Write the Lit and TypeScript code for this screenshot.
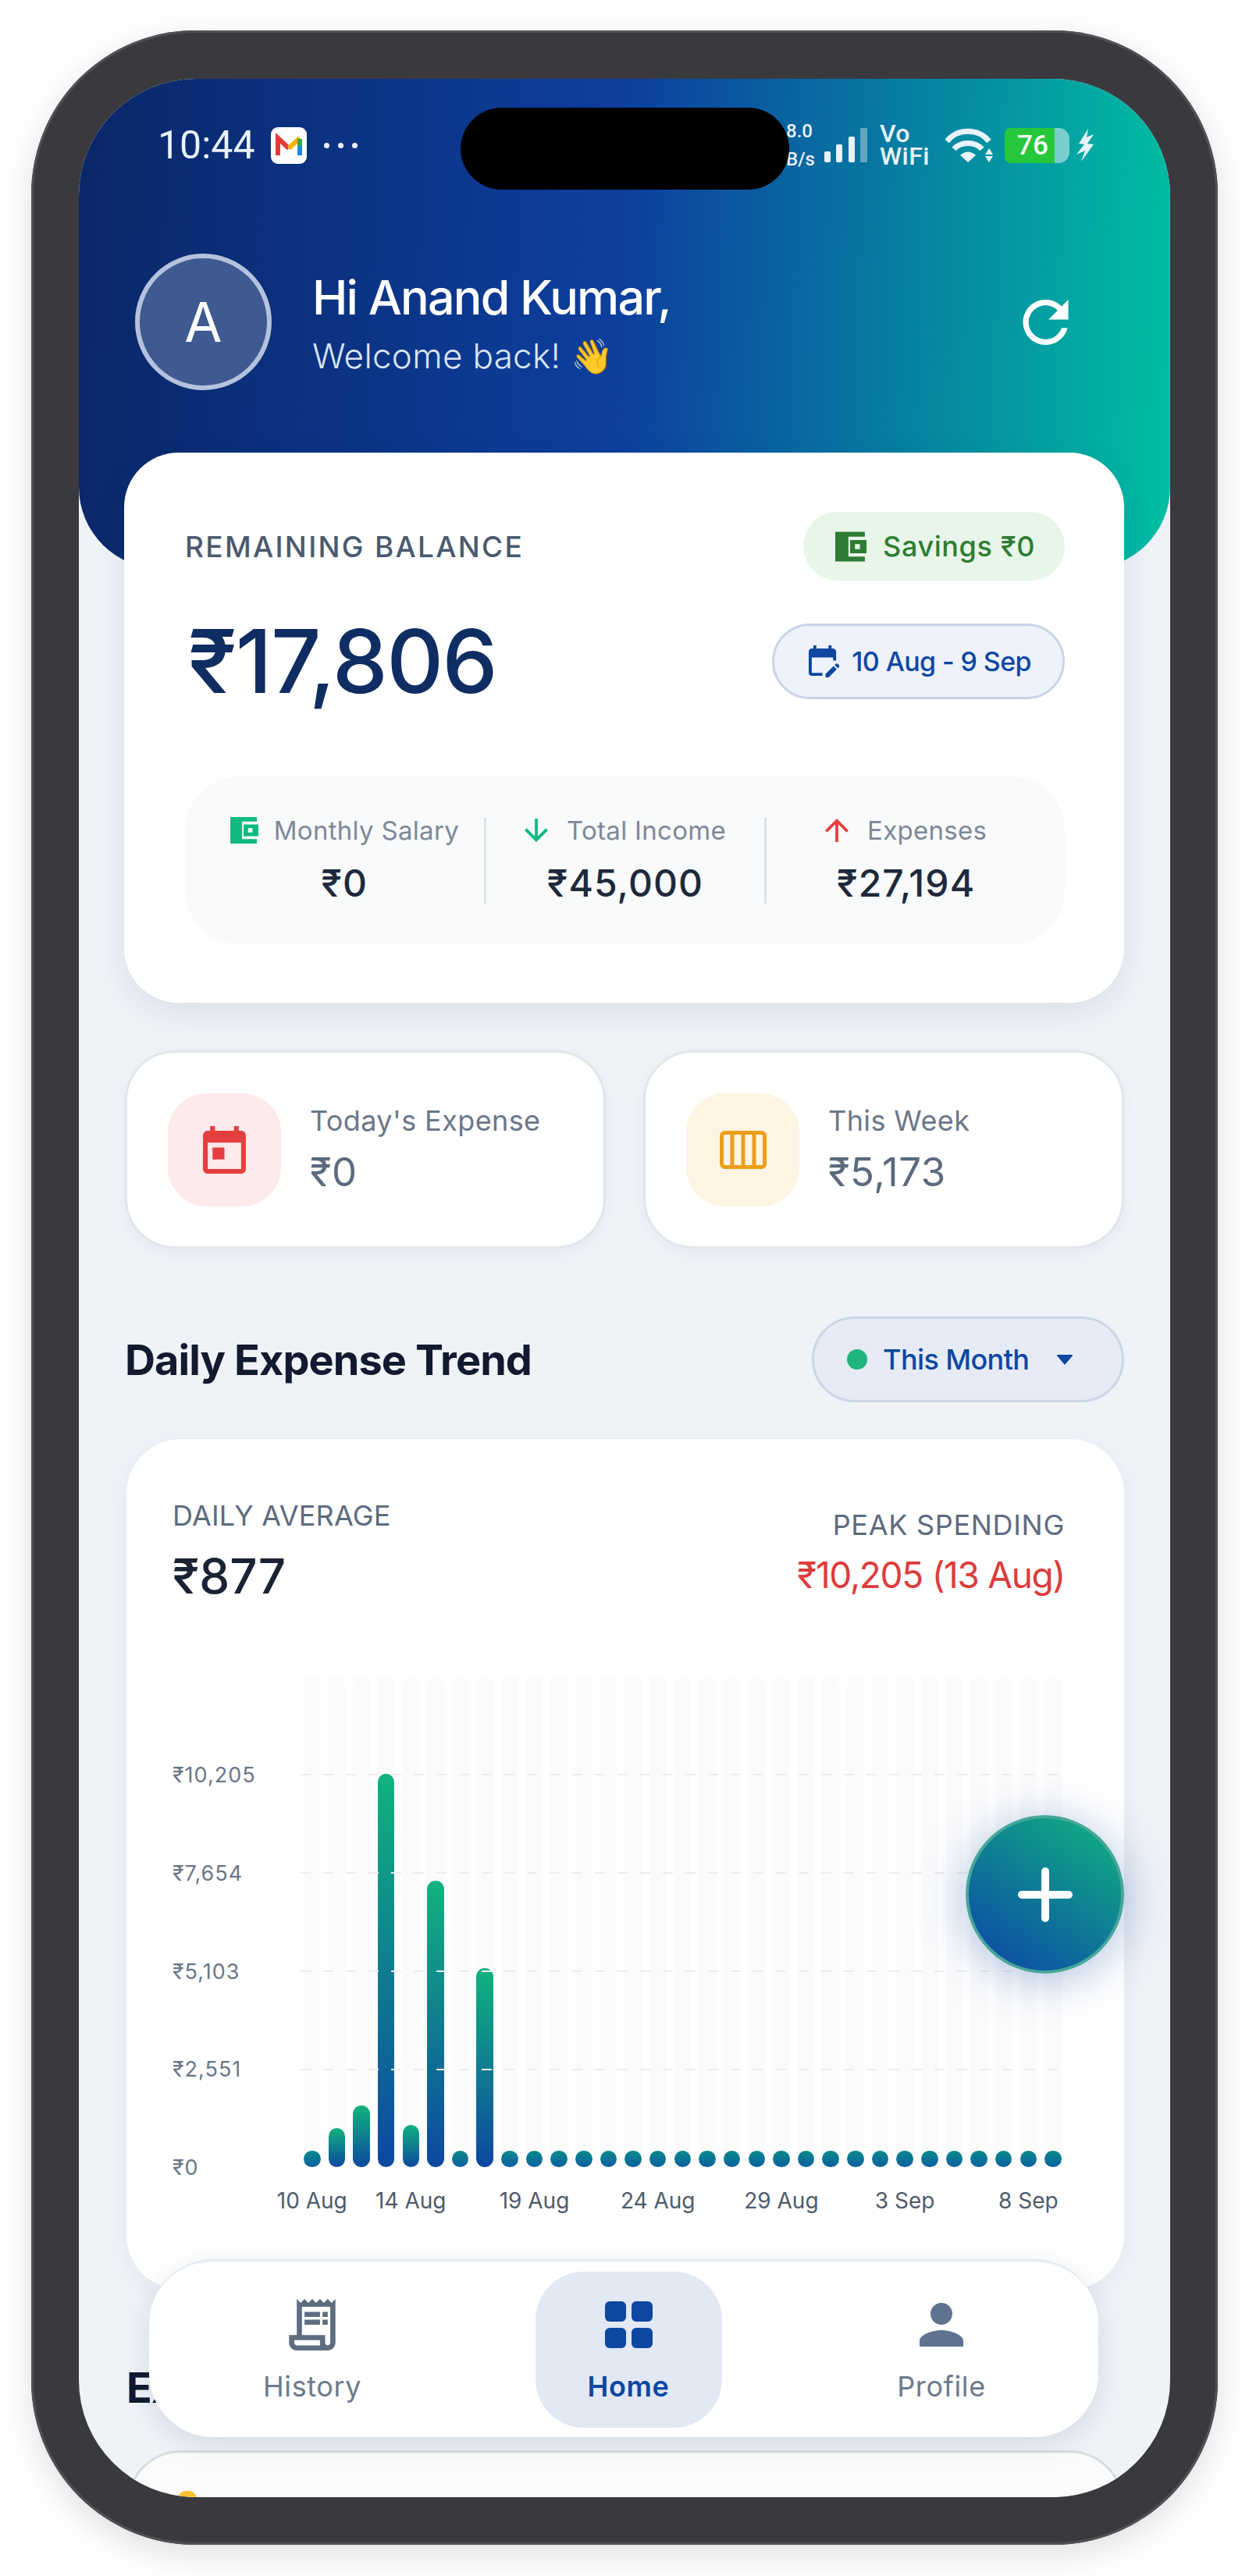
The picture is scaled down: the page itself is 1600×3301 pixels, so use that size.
import { LitElement, html, css, svg } from 'lit';
import { customElement } from 'lit/decorators.js';

// heights of the 31 daily bars, 10 Aug to 9 Sep
const BAR_HEIGHTS = [21, 50, 79, 504, 54, 367, 21, 255];
const DAY_LABELS: Record<number, string> = {
  0: '10 Aug', 4: '14 Aug', 9: '19 Aug', 14: '24 Aug',
  19: '29 Aug', 24: '3 Sep', 29: '8 Sep'
};
const Y_LABELS = ['₹10,205', '₹7,654', '₹5,103', '₹2,551', '₹0'];

const walletIcon = svg`
  <path d="M3 3h18v3H11v12h10v3H3z"/>
  <path fill-rule="evenodd" d="M12 8h10v8H12zM15 10.5v3h3v-3z"/>`;

const receiptIcon = svg`
  <path d="M19.5 3.5 18 2l-1.5 1.5L15 2l-1.5 1.5L12 2l-1.5 1.5L9 2 7.5 3.5 6 2v14H3v3c0 1.66 1.34 3 3 3h12c1.66 0 3-1.34 3-3V2l-1.5 1.5zM15 20H6c-.55 0-1-.45-1-1v-1h10v2zm4-1c0 .55-.45 1-1 1s-1-.45-1-1v-3H8V5h11v14z"/>
  <path d="M9 7h6v2H9zm7 0h2v2h-2zm-7 3h6v2H9zm7 0h2v2h-2z"/>`;

@customElement('app-root')
export class AppRoot extends LitElement {
  static styles = css`
    :host {
      display: block;
      width: 1600px;
      height: 3301px;
      background: #fff;
      font-family: Inter, 'Noto Sans', sans-serif;
      color: #1e293b;
    }

    .page {
      padding: 39px 40px;
    }

    .phone {
      padding: 62px 61px 61px;
      height: 3222px;
      box-sizing: border-box;
      background: #3a3a3e;
      border-radius: 210px;
      box-shadow: 0 12px 44px rgba(0, 0, 0, .13), inset 0 0 0 3px #515155;
    }

    .screen {
      position: relative;
      height: 3099px;
      overflow: hidden;
      background: #eff2f7;
      border-radius: 150px;
    }

    .island {
      position: absolute;
      left: 489px;
      top: 37px;
      width: 421px;
      height: 105px;
      border-radius: 53px;
      background: #000;
    }

    /* header */
    .header {
      height: 628px;
      padding-top: 59px;
      box-sizing: border-box;
      background: linear-gradient(92deg, #0a2768 0%, #0d3f9f 50%, #00bfa3 100%);
      border-radius: 0 0 105px 105px;
      color: #fff;
    }

    .status {
      display: flex;
      justify-content: space-between;
      align-items: center;
      height: 52px;
      padding: 0 98px 0 101px;
      font-family: Roboto, sans-serif;
      color: #e8f3fb;
    }

    .status-left, .status-right {
      display: flex;
      align-items: center;
    }

    .time {
      font-size: 50px;
      line-height: 52px;
      margin-right: 20px;
    }

    .gmail {
      width: 46px;
      height: 47px;
      margin-right: 22px;
    }

    .dots {
      display: flex;
      gap: 11px;
    }

    .dots i {
      width: 7px;
      height: 7px;
      border-radius: 50%;
      background: #e8f3fb;
    }

    .speed {
      width: 34px;
      margin-right: 15px;
      font-size: 24px;
      font-weight: 500;
      line-height: 36px;
      text-align: right;
      white-space: nowrap;
    }

    .signal {
      width: 55px;
      height: 44px;
      margin-right: 16px;
    }

    .vowifi {
      width: 70px;
      margin-right: 14px;
      font-size: 32px;
      font-weight: 500;
      line-height: 29px;
      letter-spacing: .4px;
    }

    .wifi {
      width: 62px;
      height: 44px;
      margin-right: 14px;
    }

    .battery {
      display: flex;
      width: 83px;
      height: 45px;
      margin-right: 9px;
    }

    .battery-level {
      width: 64px;
      background: #27c73c;
      border-radius: 8px 0 0 8px;
      font-size: 35px;
      font-weight: 500;
      line-height: 45px;
      text-align: center;
      color: #f3fff3;
      padding-left: 8px;
      box-sizing: border-box;
    }

    .battery-rest {
      width: 19px;
      background: rgba(220, 240, 240, .55);
      border-radius: 0 14px 14px 0;
    }

    .bolt {
      width: 22px;
      height: 42px;
    }

    .greeting {
      display: flex;
      align-items: center;
      margin-top: 113px;
      padding: 0 130px 0 72px;
    }

    .avatar {
      display: flex;
      align-items: center;
      justify-content: center;
      width: 175px;
      height: 175px;
      box-sizing: border-box;
      border: 6px solid #b5c2de;
      border-radius: 50%;
      background: #3e5a90;
      font-size: 70px;
      font-weight: 400;
    }

    .greeting-text {
      flex: 1;
      margin-left: 52px;
    }

    .hello {
      font-size: 61px;
      font-weight: 500;
      line-height: 80px;
      letter-spacing: -1.8px;
    }

    .welcome {
      margin-top: 7px;
      font-size: 44px;
      font-weight: 300;
      line-height: 56px;
      letter-spacing: .3px;
      color: #d8e5f6;
    }

    .refresh {
      width: 59px;
      height: 58px;
      fill: #fff;
    }

    /* content */
    .content {
      padding: 0 59px 0 59px;
    }

    .balance {
      margin: -149px 0 0 -1px;
      height: 705px;
      padding: 76px 76px 0 78px;
      box-sizing: border-box;
      background: #fff;
      border-radius: 70px;
      box-shadow: 0 12px 40px rgba(30, 50, 90, .09);
    }

    .balance-row {
      display: flex;
      align-items: center;
      justify-content: space-between;
    }

    .balance-label {
      font-size: 37px;
      font-weight: 500;
      letter-spacing: 2.3px;
      color: #4b5a6e;
    }

    .savings {
      display: flex;
      align-items: center;
      gap: 21px;
      height: 88px;
      padding: 0 38px 0 41px;
      border-radius: 44px;
      background: #e8f5e9;
      color: #2e7d32;
      font-size: 36px;
      font-weight: 500;
      letter-spacing: .6px;
    }

    .savings svg {
      width: 40px;
      height: 39px;
      fill: #2e7d32;
    }

    .amount-row {
      margin-top: 55px;
    }

    .amount {
      margin-left: 4px;
      font-size: 113px;
      font-weight: 500;
      letter-spacing: -1.6px;
      color: #0f2d63;
      line-height: 97px;
    }

    .range {
      display: flex;
      align-items: center;
      gap: 15px;
      height: 97px;
      padding: 0 40px 0 43px;
      box-sizing: border-box;
      border: 3px solid #c9d4e8;
      border-radius: 49px;
      background: #eef2fa;
      color: #0d47a1;
      font-size: 34px;
      font-weight: 500;
      letter-spacing: -.6px;
    }

    .range svg {
      width: 41px;
      height: 41px;
      fill: #0d47a1;
    }

    .stats {
      display: flex;
      align-items: center;
      height: 215px;
      margin-top: 99px;
      padding: 0 25px 0 26px;
      background: #f8fafc;
      border-radius: 70px;
    }

    .stat {
      flex: 1;
      height: 110px;
      display: flex;
      flex-direction: column;
      align-items: center;
      justify-content: space-between;
    }

    .stat + .stat {
      border-left: 3px solid #dfe3e9;
    }

    .stat-label {
      display: flex;
      align-items: center;
      gap: 20px;
      height: 40px;
      margin-top: -4px;
      font-size: 33px;
      font-weight: 400;
      letter-spacing: .3px;
      color: #7f8896;
      white-space: nowrap;
    }

    .stat-label svg {
      width: 36px;
      height: 34px;
    }

    .stat-label svg.green {
      fill: #10b981;
    }

    .stat-label svg.red {
      fill: #e53e3e;
    }

    .stat-label svg.arrow {
      width: 30px;
      height: 30px;
      margin-right: 4px;
    }

    .stat-value {
      font-size: 48px;
      font-weight: 500;
      line-height: 52px;
      letter-spacing: 1.1px;
      color: #1e293b;
    }

    .mini-row {
      display: flex;
      gap: 48px;
      margin-top: 61px;
    }

    .mini {
      flex: 1;
      display: flex;
      align-items: center;
      gap: 37px;
      height: 254px;
      padding-left: 52px;
      box-sizing: border-box;
      background: #fff;
      border: 3px solid #e2e5ea;
      border-radius: 64px;
      box-shadow: 0 6px 20px rgba(30, 50, 90, .04);
    }

    .mini-icon {
      display: flex;
      align-items: center;
      justify-content: center;
      width: 145px;
      height: 145px;
      border-radius: 50px;
    }

    .mini-icon.red {
      background: #fdeaea;
      fill: #e53e3e;
    }

    .mini-icon.amber {
      background: #fdf4e3;
    }

    .mini-label {
      font-size: 36px;
      font-weight: 400;
      line-height: 46px;
      letter-spacing: .4px;
      color: #6b7788;
    }

    .mini-value {
      margin-top: 12px;
      font-size: 51px;
      font-weight: 400;
      line-height: 62px;
      letter-spacing: .5px;
      color: #5b6a7d;
    }

    .section-head {
      display: flex;
      align-items: center;
      justify-content: space-between;
      height: 110px;
      margin-top: 87px;
    }

    h2 {
      margin: 0;
      font-size: 54px;
      font-weight: 700;
      letter-spacing: -.9px;
      color: #111a2e;
    }

    .month {
      display: flex;
      align-items: center;
      width: 400px;
      height: 110px;
      padding-left: 42px;
      box-sizing: border-box;
      border: 3px solid #cbd6e8;
      border-radius: 55px;
      background: #e6ebf5;
      color: #0d47a1;
      font-size: 36px;
      font-weight: 500;
      letter-spacing: -.6px;
    }

    .month .dot {
      width: 26px;
      height: 26px;
      margin-right: 20px;
      border-radius: 50%;
      background: #1fb57f;
    }

    .month svg {
      width: 20px;
      height: 14px;
      margin-left: 36px;
      fill: #0d47a1;
    }

    /* chart card */
    .chart-card {
      height: 1090px;
      margin: 47px 0 0 2px;
      padding: 76px 80px 0 59px;
      box-sizing: border-box;
      background: #fff;
      border-radius: 70px;
      box-shadow: 0 8px 30px rgba(30, 50, 90, .05);
    }

    .chart-head {
      display: flex;
      justify-content: space-between;
      height: 228px;
    }

    .chart-label {
      font-size: 36px;
      font-weight: 400;
      line-height: 44px;
      letter-spacing: .2px;
      color: #5d6b7e;
    }

    .chart-avg {
      margin-top: 20px;
      font-size: 62px;
      font-weight: 500;
      line-height: 72px;
      color: #1a2233;
    }

    .chart-peak {
      text-align: right;
      padding-top: 12px;
      margin-right: -4px;
    }

    .chart-peak .chart-label {
      letter-spacing: .7px;
    }

    .peak-value {
      margin-top: 14px;
      font-size: 46px;
      font-weight: 400;
      line-height: 56px;
      letter-spacing: -1.3px;
      color: #dc3c3c;
    }

    .plot {
      display: flex;
    }

    .y-axis {
      display: flex;
      flex-direction: column;
      justify-content: space-between;
      width: 168px;
      height: 537px;
      margin-top: 110px;
      flex-shrink: 0;
      font-size: 27px;
      line-height: 34px;
      letter-spacing: 1px;
      color: #6b7788;
    }

    .chart-main {
      width: 971px;
      flex-shrink: 0;
    }

    .bars {
      position: relative;
      display: flex;
      justify-content: space-between;
      height: 629px;
    }

    .gridline {
      position: absolute;
      left: -4px;
      right: -2px;
      height: 2px;
      background: repeating-linear-gradient(90deg, #ececef 0 13px, transparent 13px 29px);
    }

    .track {
      position: relative;
      width: 21.5px;
      display: flex;
      align-items: flex-end;
      background: #fbfbfc;
      border-radius: 11px 11px 0 0;
    }

    .bar {
      width: 100%;
      border-radius: 11px;
      background: linear-gradient(180deg, #10b37e 0%, #0d47a1 100%);
    }

    .bar.flat {
      background: linear-gradient(180deg, #0a8a8c 0%, #0b5fa0 100%);
    }

    .x-axis {
      display: flex;
      justify-content: space-between;
      margin-top: 26px;
      font-size: 28px;
      line-height: 34px;
      color: #4f5b6b;
    }

    .x-cell {
      width: 21.5px;
      display: flex;
      justify-content: center;
      white-space: nowrap;
    }

    .next-title {
      margin-top: 93px;
      margin-left: 2px;
      line-height: 66px;
    }

    .next-card {
      height: 200px;
      margin: 47px 0 0 2px;
      padding: 49px 0 0 63px;
      box-sizing: border-box;
      background: #fbfbfc;
      border: 3px solid #d9dce1;
      border-radius: 70px;
    }

    .next-icon {
      width: 24px;
      height: 24px;
      border-radius: 10px 10px 0 0;
      background: #fbc02d;
    }

    /* floating parts */
    .fab {
      position: absolute;
      left: 1136px;
      top: 2225px;
      display: flex;
      align-items: center;
      justify-content: center;
      width: 203px;
      height: 203px;
      box-sizing: border-box;
      border: 4px solid #46a69a;
      border-radius: 50%;
      background: linear-gradient(35deg, #0d4fa5 10%, #10a884 90%);
      box-shadow: 0 8px 60px rgba(13, 71, 161, .35);
    }

    .fab svg {
      width: 70px;
      height: 70px;
      stroke: #fff;
      stroke-width: 10;
      stroke-linecap: round;
    }

    .nav {
      position: absolute;
      left: 90px;
      top: 2794px;
      display: grid;
      grid-template-columns: 418px 392px 406px;
      align-items: center;
      width: 1216px;
      height: 228px;
      box-sizing: border-box;
      background: #fff;
      border-top: 3px solid #e6ebf1;
      border-radius: 82px;
      box-shadow: 0 10px 34px rgba(30, 50, 90, .12);
    }

    .nav-item {
      display: flex;
      flex-direction: column;
      align-items: center;
      justify-content: center;
      height: 200px;
      font-size: 36px;
      font-weight: 400;
      letter-spacing: .6px;
      color: #6e7a8a;
    }

    .nav-item svg {
      height: 66px;
      fill: #5e6d80;
      margin: 4px 0 24px;
    }

    .nav-item span {
      line-height: 44px;
    }

    .nav-item.active {
      justify-self: center;
      width: 239px;
      background: #e2e8f4;
      border-radius: 62px;
      color: #0d47a1;
      font-weight: 600;
    }

    .nav-item.active svg {
      fill: #0d47a1;
    }

    .nav-item.profile {
      padding-left: 4px;
    }

    .nav-item.profile svg {
      fill: #5f7390;
    }
  `;

  renderStatus() {
    return html`
      <div class="status">
        <div class="status-left">
          <span class="time">10:44</span>
          <svg class="gmail" viewBox="0 0 46 47">
            <rect width="46" height="47" rx="9" fill="#fff"/>
            <path d="M9 36V14l14 13" fill="none" stroke="#e53935" stroke-width="6"/>
            <path d="M23 27l14-13" fill="none" stroke="#f4b400" stroke-width="6"/>
            <path d="M37 15v9" fill="none" stroke="#34a853" stroke-width="6"/>
            <path d="M37 24v12" fill="none" stroke="#1e88e5" stroke-width="6"/>
          </svg>
          <span class="dots"><i></i><i></i><i></i></span>
        </div>
        <div class="status-right">
          <span class="speed">8.0<br>B/s</span>
          <svg class="signal" viewBox="0 0 55 44" fill="#e8f3fb">
            <rect x="0" y="30" width="8" height="14" rx="2"/>
            <rect x="15" y="21" width="8" height="23" rx="2"/>
            <rect x="31" y="11" width="8" height="33" rx="2"/>
            <rect x="46" y="0" width="9" height="44" opacity=".4"/>
          </svg>
          <span class="vowifi">Vo<br>WiFi</span>
          <svg class="wifi" viewBox="0 0 62 44" fill="none" stroke="#e8f3fb" stroke-width="7">
            <path d="M2 17C16 0 42 0 56 17"/>
            <path d="M11 27c9-10 27-10 36 0"/>
            <path d="M19 35c6-6 14-6 20 0l-10 9z" fill="#e8f3fb" stroke="none"/>
            <path d="M56 26l5 8H51zM56 44l5-8H51z" fill="#e8f3fb" stroke="none"/>
          </svg>
          <div class="battery">
            <div class="battery-level">76</div>
            <div class="battery-rest"></div>
          </div>
          <svg class="bolt" viewBox="0 0 22 42" fill="#e8f3fb">
            <path d="M15 0 3 19l7 1-10 13 11-5-5 14 16-22-8-1 8-12-9 4z"/>
          </svg>
        </div>
      </div>`;
  }

  renderBalance() {
    return html`
      <div class="balance">
        <div class="balance-row">
          <span class="balance-label">REMAINING BALANCE</span>
          <span class="savings"><svg viewBox="3 3 19 18">${walletIcon}</svg>Savings ₹0</span>
        </div>
        <div class="balance-row amount-row">
          <span class="amount">₹17,806</span>
          <span class="range">
            <svg viewBox="3 2 20 21"><path d="M5 10h14v2h2V6c0-1.1-.9-2-2-2h-1V2h-2v2H8V2H6v2H5c-1.11 0-1.99.9-1.99 2L3 20c0 1.1.89 2 2 2h7v-2H5V10zm17.84 6.28-.71.71-2.12-2.12.71-.71c.39-.39 1.02-.39 1.41 0l.71.71c.39.39.39 1.02 0 1.41zm-3.54-.7 2.12 2.12-5.3 5.3H14v-2.12l5.3-5.3z"/></svg>
            10 Aug - 9 Sep
          </span>
        </div>
        <div class="stats">
          <div class="stat">
            <span class="stat-label"><svg class="green" viewBox="3 3 19 18">${walletIcon}</svg>Monthly Salary</span>
            <span class="stat-value">₹0</span>
          </div>
          <div class="stat">
            <span class="stat-label"><svg class="arrow green" viewBox="4 4 16 16"><path d="M20 12l-1.41-1.41L13 16.17V4h-2v12.17l-5.58-5.59L4 12l8 8 8-8z"/></svg>Total Income</span>
            <span class="stat-value">₹45,000</span>
          </div>
          <div class="stat">
            <span class="stat-label"><svg class="arrow red" viewBox="4 4 16 16"><path d="M4 12l1.41 1.41L11 7.83V20h2V7.83l5.58 5.59L20 12l-8-8-8 8z"/></svg>Expenses</span>
            <span class="stat-value">₹27,194</span>
          </div>
        </div>
      </div>`;
  }

  renderMiniCards() {
    return html`
      <div class="mini-row">
        <div class="mini">
          <div class="mini-icon red">
            <svg width="55" height="61" viewBox="3 1 18 20"><path d="M19 3h-1V1h-2v2H8V1H6v2H5c-1.11 0-1.99.9-1.99 2L3 19c0 1.1.89 2 2 2h14c1.1 0 2-.9 2-2V5c0-1.1-.9-2-2-2zm0 16H5V8h14v11zM7 10h5v5H7z"/></svg>
          </div>
          <div>
            <div class="mini-label">Today's Expense</div>
            <div class="mini-value">₹0</div>
          </div>
        </div>
        <div class="mini">
          <div class="mini-icon amber">
            <svg width="60" height="49" viewBox="0 0 60 49" fill="none" stroke="#eb9f1c" stroke-width="5">
              <rect x="2.5" y="2.5" width="55" height="44" rx="4"/>
              <path d="M16 3v43M30 3v43M44 3v43"/>
            </svg>
          </div>
          <div>
            <div class="mini-label">This Week</div>
            <div class="mini-value">₹5,173</div>
          </div>
        </div>
      </div>`;
  }

  renderChart() {
    const days = Array.from({ length: 31 }, (_, i) => i);
    return html`
      <div class="chart-card">
        <div class="chart-head">
          <div>
            <div class="chart-label">DAILY AVERAGE</div>
            <div class="chart-avg">₹877</div>
          </div>
          <div class="chart-peak">
            <div class="chart-label">PEAK SPENDING</div>
            <div class="peak-value">₹10,205 (13 Aug)</div>
          </div>
        </div>
        <div class="plot">
          <div class="y-axis">${Y_LABELS.map((label) => html`<span>${label}</span>`)}</div>
          <div class="chart-main">
            <div class="bars">
              ${days.map((i) => {
                const height = BAR_HEIGHTS[i] ?? 21;
                return html`<div class="track">
                  <div class="bar ${height < 30 ? 'flat' : ''}" style="height:${height}px"></div>
                </div>`;
              })}
              ${[125, 251, 377, 503].map((top) => html`<div class="gridline" style="top:${top}px"></div>`)}
            </div>
            <div class="x-axis">
              ${days.map((i) => html`<span class="x-cell">${DAY_LABELS[i] ?? ''}</span>`)}
            </div>
          </div>
        </div>
      </div>`;
  }

  renderNav() {
    return html`
      <nav class="nav">
        <div class="nav-item">
          <svg width="60" viewBox="3 2 18 20">${receiptIcon}</svg>
          <span>History</span>
        </div>
        <div class="nav-item active">
          <svg width="61" viewBox="0 0 61 60">
            <rect width="27" height="26" rx="6"/>
            <rect x="34" width="27" height="26" rx="6"/>
            <rect y="34" width="27" height="26" rx="6"/>
            <rect x="34" y="34" width="27" height="26" rx="6"/>
          </svg>
          <span>Home</span>
        </div>
        <div class="nav-item profile">
          <svg width="56" viewBox="4 4 16 16"><path d="M12 12c2.21 0 4-1.79 4-4s-1.79-4-4-4-4 1.79-4 4 1.79 4 4 4zm0 2c-2.67 0-8 1.34-8 4v2h16v-2c0-2.66-5.33-4-8-4z"/></svg>
          <span>Profile</span>
        </div>
      </nav>`;
  }

  render() {
    return html`
      <div class="page">
        <div class="phone">
          <div class="screen">
            <header class="header">
              ${this.renderStatus()}
              <div class="greeting">
                <div class="avatar">A</div>
                <div class="greeting-text">
                  <div class="hello">Hi Anand Kumar,</div>
                  <div class="welcome">Welcome back! 👋</div>
                </div>
                <svg class="refresh" viewBox="4 4 16 16"><path d="M17.65 6.35C16.2 4.9 14.21 4 12 4c-4.42 0-7.99 3.58-7.99 8s3.57 8 7.99 8c3.73 0 6.84-2.55 7.73-6h-2.08c-.82 2.33-3.04 4-5.65 4-3.31 0-6-2.69-6-6s2.69-6 6-6c1.66 0 3.14.69 4.22 1.78L13 11h7V4l-2.35 2.35z"/></svg>
              </div>
            </header>
            <main class="content">
              ${this.renderBalance()}
              ${this.renderMiniCards()}
              <div class="section-head">
                <h2>Daily Expense Trend</h2>
                <div class="month">
                  <span class="dot"></span>This Month
                  <svg viewBox="0 0 20 14"><path d="M1 1h18a1 1 0 0 1 .8 1.6L10 14 .2 2.6A1 1 0 0 1 1 1z"/></svg>
                </div>
              </div>
              ${this.renderChart()}
              <h2 class="next-title">Expense Categories</h2>
              <div class="next-card"><div class="next-icon"></div></div>
            </main>
            <div class="island"></div>
            <div class="fab"><svg viewBox="0 0 70 70"><path d="M35 5v60M5 35h60"/></svg></div>
            ${this.renderNav()}
          </div>
        </div>
      </div>`;
  }
}
